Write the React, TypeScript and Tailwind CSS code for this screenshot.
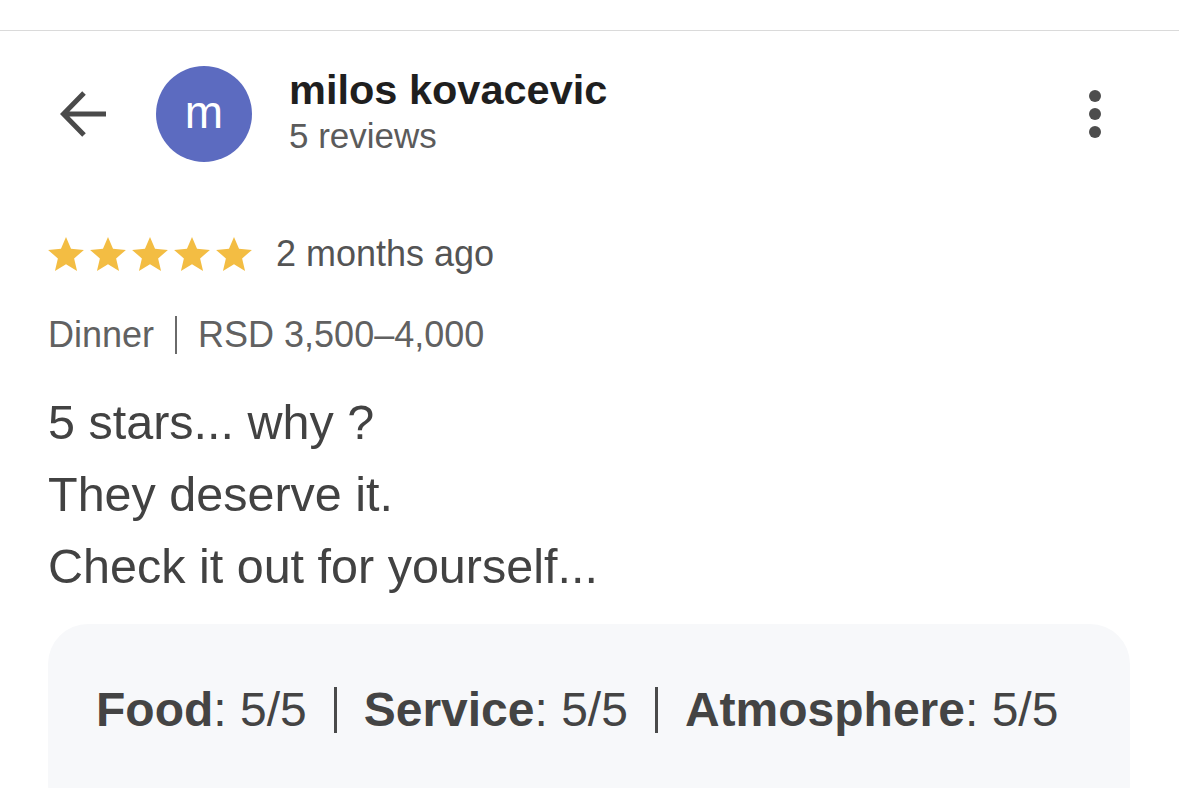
import React from "react";

const font = { fontFamily: '"Liberation Sans", Arial, Helvetica, sans-serif' };

function BackArrow() {
  return (
    <svg width="48" height="48" viewBox="0 0 48 48" className="shrink-0" fill="none">
      <path
        d="M46 24H4M24 3L3.5 24 24 45"
        stroke="#4a4a4a"
        strokeWidth="5"
        strokeLinecap="butt"
        strokeLinejoin="miter"
      />
    </svg>
  );
}

function Star() {
  return (
    <svg width="36" height="34" viewBox="2 2 20 19">
      <path
        d="M12 17.27L18.18 21l-1.64-7.03L22 9.24l-7.19-.61L12 2 9.19 8.63 2 9.24l5.46 4.73L5.82 21z"
        fill="#f3bd43"
      />
    </svg>
  );
}

const ratings = [
  { label: "Food", value: "5/5" },
  { label: "Service", value: "5/5" },
  { label: "Atmosphere", value: "5/5" },
];

export default function App() {
  return (
    <div className="h-[788px] w-full overflow-hidden bg-white" style={font}>
      <div className="h-[30px]" />
      <div className="border-t border-[#dadada]" />

      {/* header */}
      <div className="flex items-start pl-[60px] pr-[78px] pt-[35px]">
        <div className="flex h-[96px] items-center">
          <BackArrow />
        </div>
        <div className="ml-[48px] flex h-[96px] w-[96px] shrink-0 items-center justify-center rounded-full bg-[#5c6bc0]">
          <span className="pb-[4px] text-[46px] leading-none text-white">m</span>
        </div>
        <div className="ml-[37px] flex-1">
          <div className="text-[41.5px] font-bold leading-[48px] text-[#1f1f1f]">milos kovacevic</div>
          <div className="text-[35px] leading-[44px] text-[#5b5b5b]">5 reviews</div>
        </div>
        <div className="flex h-[96px] flex-col items-center justify-center gap-[6px]">
          <span className="h-[12px] w-[12px] rounded-full bg-[#4d4d4d]" />
          <span className="h-[12px] w-[12px] rounded-full bg-[#4d4d4d]" />
          <span className="h-[12px] w-[12px] rounded-full bg-[#4d4d4d]" />
        </div>
      </div>

      <div className="px-[48px]">
        {/* stars */}
        <div className="mt-[68px] flex h-[48px] items-center">
          <div className="flex gap-[6px]">
            <Star />
            <Star />
            <Star />
            <Star />
            <Star />
          </div>
          <span className="ml-[24px] text-[36px] leading-[48px] text-[#545454]">2 months ago</span>
        </div>

        {/* meta */}
        <div className="mt-[33px] flex items-center text-[36px] leading-[48px] text-[#616161]">
          <span>Dinner</span>
          <span className="mx-[21px] h-[38px] w-[2px] bg-[#6a6a6a]" />
          <span>RSD 3,500–4,000</span>
        </div>

        {/* body */}
        <div className="mt-[27px] text-[48.5px] leading-[72px] text-[#424242]">
          <p>5 stars... why ?</p>
          <p>They deserve it.</p>
          <p>Check it out for yourself...</p>
        </div>

        {/* ratings box */}
        <div className="mt-[22px] h-[200px] w-[1082px] rounded-[40px] bg-[#f7f8fa] pl-[48px] pt-[50px]">
          <div className="flex items-center text-[48px] leading-[72px] text-[#444444]">
            {ratings.map((r, i) => (
              <React.Fragment key={r.label}>
                {i > 0 && <span className="mx-[27px] h-[46px] w-[3px] bg-[#4a4a4a]" />}
                <span>
                  <span className="font-bold">{r.label}</span>: {r.value}
                </span>
              </React.Fragment>
            ))}
          </div>
        </div>
      </div>
    </div>
  );
}
